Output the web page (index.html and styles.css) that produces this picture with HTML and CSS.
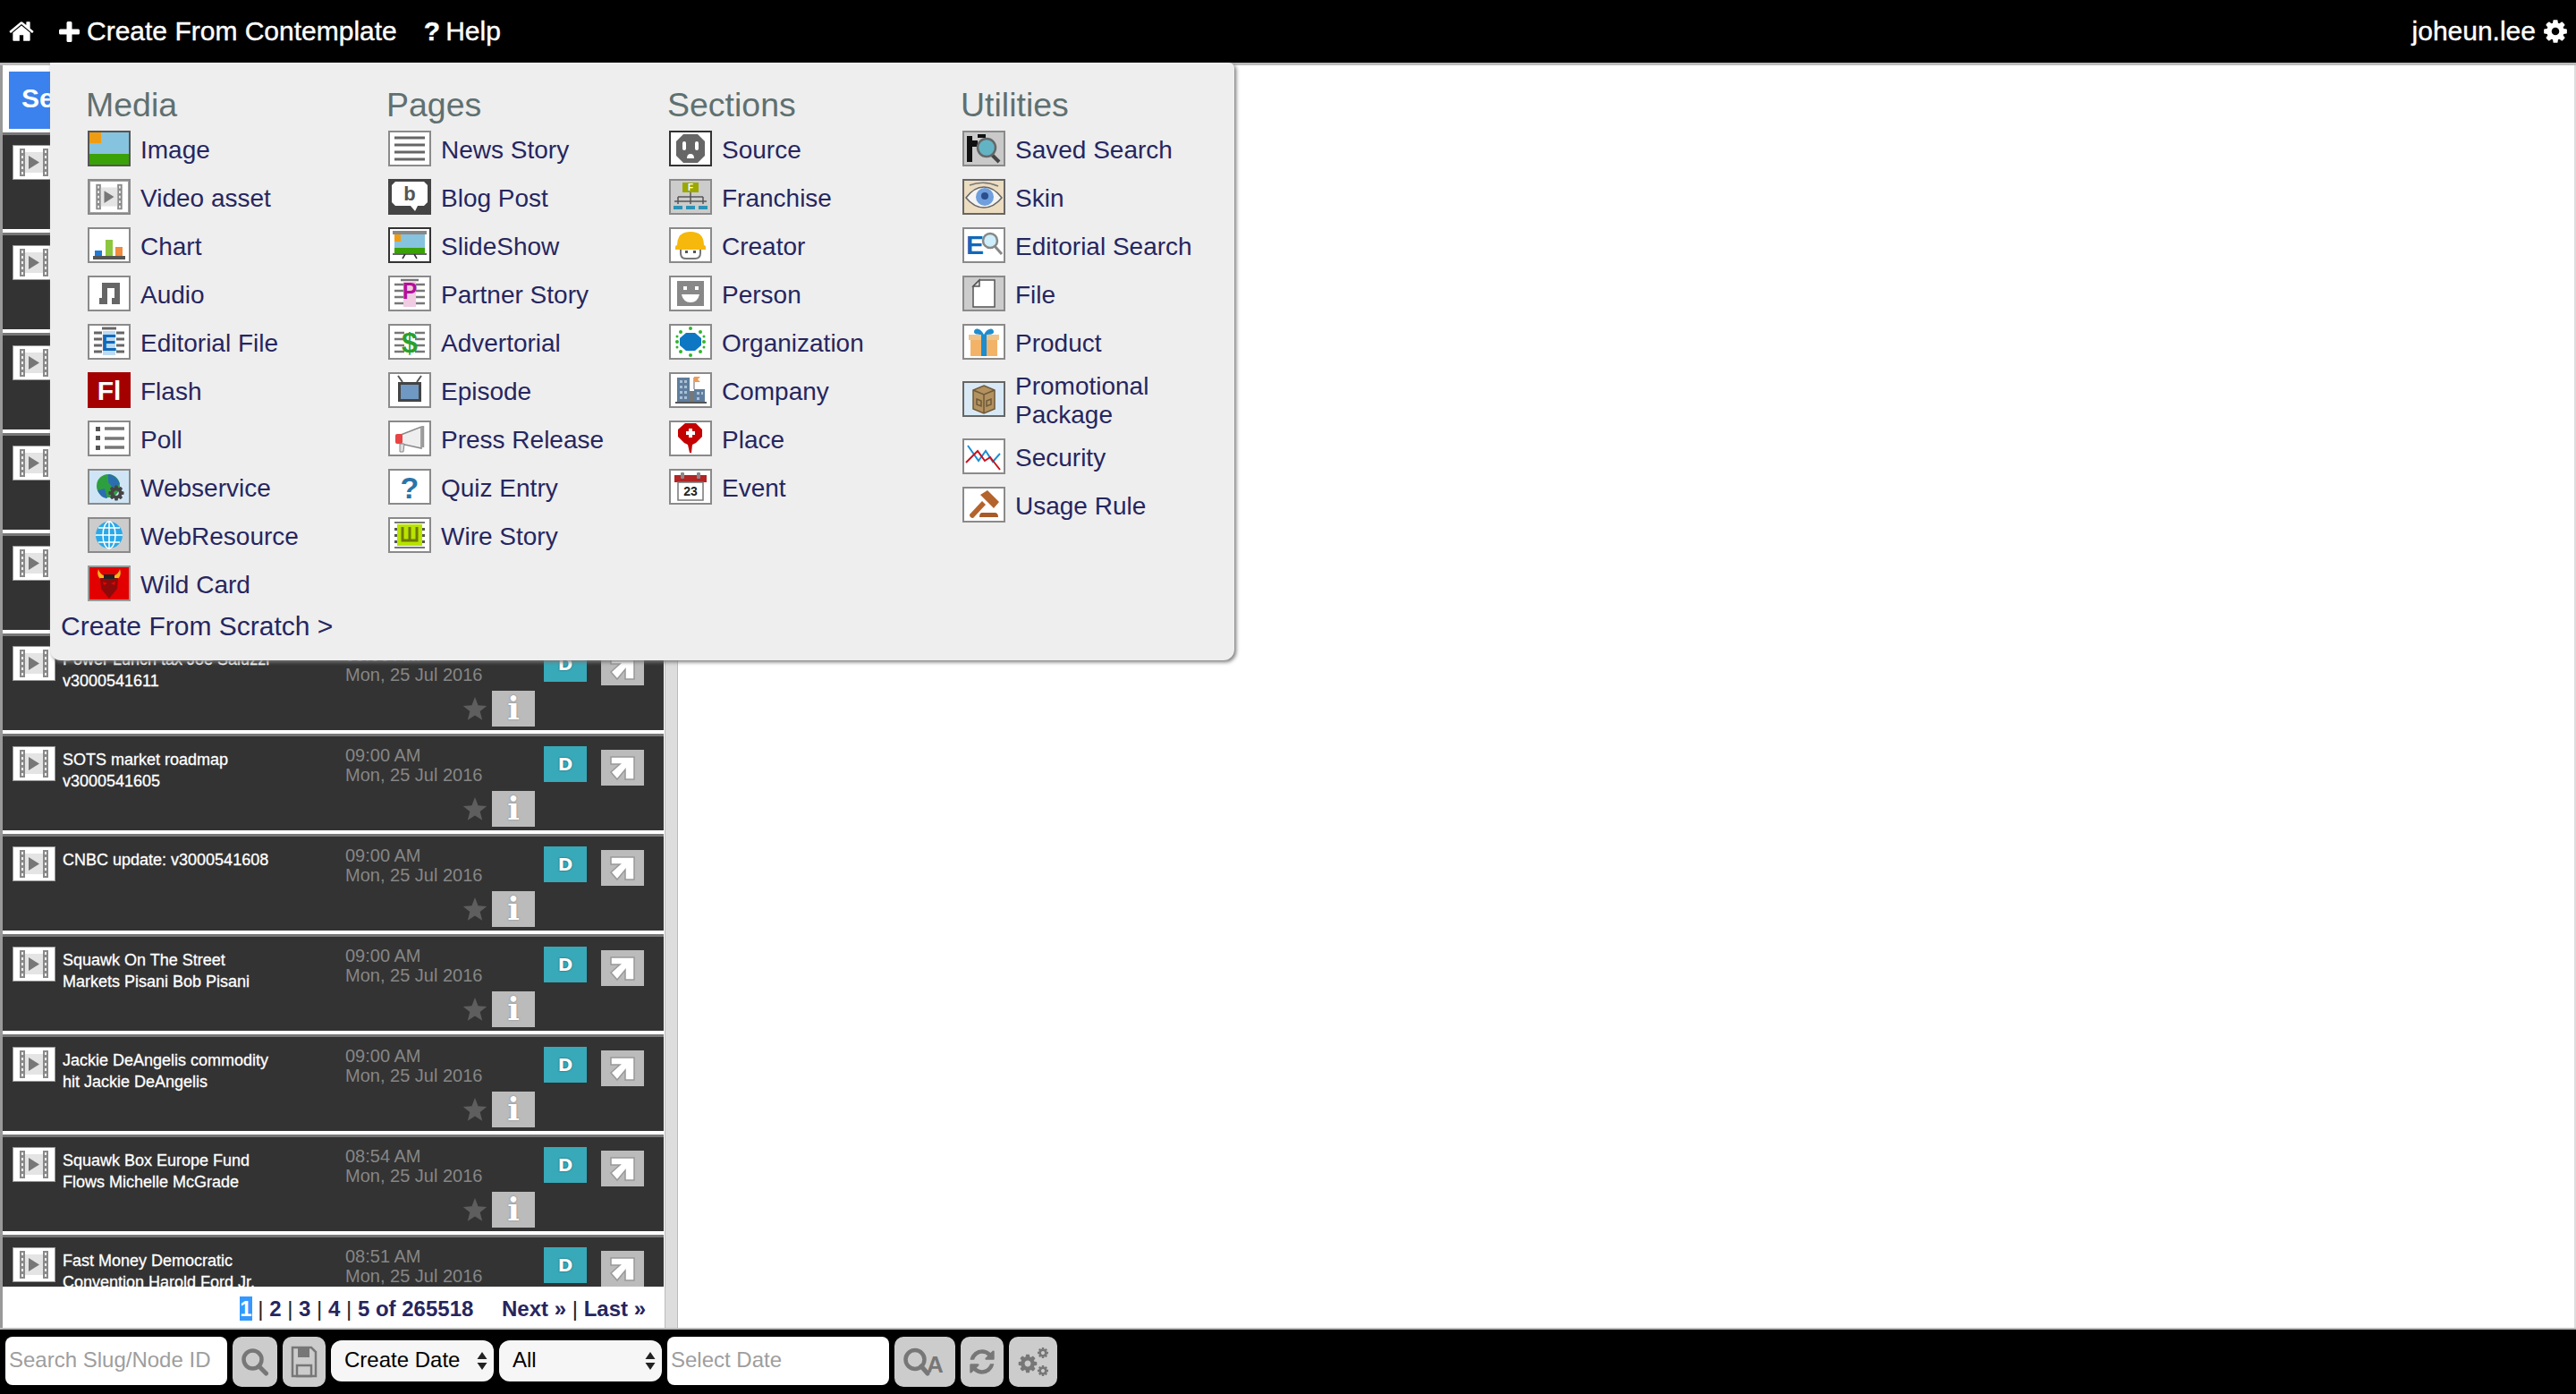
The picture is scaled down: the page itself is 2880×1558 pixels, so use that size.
FILE: index.html
```html
<!DOCTYPE html>
<html>
<head>
<meta charset="utf-8">
<title>Contemplate</title>
<link rel="stylesheet" href="styles.css">
</head>
<body>
<svg class="defs" xmlns="http://www.w3.org/2000/svg">
  <symbol id="film" viewBox="0 0 48 39">
    <rect width="48" height="39" fill="#999"/>
    <rect x="1" y="1" width="46" height="37" fill="#fff"/>
    <rect x="8" y="4" width="6" height="31" fill="#8a8a8a"/>
    <rect x="34" y="4" width="6" height="31" fill="#8a8a8a"/>
    <path d="M10 6h2v3h-2zM10 12h2v3h-2zM10 18h2v3h-2zM10 24h2v3h-2zM10 30h2v3h-2zM36 6h2v3h-2zM36 12h2v3h-2zM36 18h2v3h-2zM36 24h2v3h-2zM36 30h2v3h-2z" fill="#eee"/>
    <rect x="14" y="8" width="20" height="23" fill="#e4e4e4"/>
    <path d="M18 12l12 7.500-12 7.500z" fill="#777"/>
  </symbol>
  <symbol id="cog" viewBox="0 0 1792 1792">
    <path d="M1152 896q0-106-75-181t-181-75-181 75-75 181 75 181 181 75 181-75 75-181zm512-109v222q0 12-8 23t-20 13l-185 28q-19 54-39 91 35 50 107 138 10 12 10 25t-9 23q-27 37-99 108t-94 71q-12 0-26-9l-138-108q-44 23-91 38-16 136-29 186-7 28-36 28h-222q-14 0-24.500-8.500t-11.500-21.500l-28-184q-49-16-90-37l-141 107q-10 9-25 9-14 0-25-11-126-114-165-168-7-10-7-23 0-12 8-23 15-21 51-66.500t54-70.500q-27-50-41-99l-183-27q-13-2-21-12.500t-8-23.500v-222q0-12 8-23t19-13l186-28q14-46 39-92-40-57-107-138-10-12-10-24 0-10 9-23 26-36 98.500-107.500t94.500-71.500q13 0 26 10l138 107q44-23 91-38 16-136 29-186 7-28 36-28h222q14 0 24.500 8.500t11.500 21.500l28 184q49 16 90 37l142-107q9-9 24-9 13 0 25 10 129 119 165 170 7 8 7 22 0 12-8 23-15 21-51 66.500t-54 70.500q26 50 41 98l183 28q13 2 21 12.500t8 23.500z"/>
  </symbol>
  <symbol id="star" viewBox="0 0 26 26"><path d="M13 1l3.300 8.500 9 .6-7 5.800 2.300 8.900L13 20l-7.600 4.800 2.300-8.900-7-5.800 9-.6z" fill="#5e5e5e"/></symbol>
  <symbol id="arrow" viewBox="0 0 48 40"><path d="M11 8h26v25H27V22l-9 11-7-8 10-9H11z" fill="#fff" stroke="#999" stroke-width="1.500"/></symbol>
  <symbol id="updown" viewBox="0 0 12 20"><path d="M6 0l5.500 8H.5zM6 20L.5 12h11z" fill="#222"/></symbol>
</svg>

<div class="topbar">
  <svg class="home" viewBox="0 0 1792 1792"><path fill="#fff" d="M1472 992v480q0 26-19 45t-45 19h-384v-384h-256v384h-384q-26 0-45-19t-19-45v-480q0-1 .5-3t.5-3l575-474 575 474q1 2 1 6zm223-69l-62 74q-8 9-21 11h-3q-13 0-21-7l-692-577-692 577q-12 8-24 7-13-2-21-11l-62-74q-8-10-7-23.500t11-21.500l719-599q32-26 76-26t76 26l244 204v-195q0-14 9-23t23-9h192q14 0 23 9t9 23v408l219 182q10 8 11 21.500t-7 23.500z"/></svg>
  <svg class="plus" viewBox="0 0 23 23"><path fill="#fff" d="M8.500 1.500q0-1.500 1.500-1.500h3q1.500 0 1.500 1.500v7h7q1.500 0 1.500 1.500v3q0 1.500-1.500 1.500h-7v7q0 1.500-1.500 1.500h-3q-1.500 0-1.500-1.500v-7h-7Q0 14.500 0 13v-3q0-1.500 1.500-1.500h7z"/></svg>
  <span class="nav-create">Create From Contemplate</span>
  <b class="nav-q">?</b>
  <span>Help</span>
  <span class="nav-user">joheun.lee</span>
  <svg class="nav-cog"><use href="#cog" fill="#fff"/></svg>
</div>

<div class="middle">
  <div class="left">
    <div class="searchbtn">Se</div>
    <div class="list">
      <div class="row"><svg class="thumb"><use href="#film"/></svg></div>
      <div class="row"><svg class="thumb"><use href="#film"/></svg></div>
      <div class="row"><svg class="thumb"><use href="#film"/></svg></div>
      <div class="row"><svg class="thumb"><use href="#film"/></svg></div>
      <div class="row"><svg class="thumb"><use href="#film"/></svg></div>

      <div class="row">
        <svg class="thumb"><use href="#film"/></svg>
        <div class="title">Power Lunch tax Joe Saluzzi<br>v3000541611</div>
        <div class="meta">
          <div class="time">09:00 AM<br>Mon, 25 Jul 2016</div>
          <div class="meta-btns"><svg class="star"><use href="#star"/></svg><div class="info">i</div></div>
        </div>
        <div class="dbtn">D</div>
        <svg class="arrow"><use href="#arrow"/></svg>
      </div>
      <div class="row">
        <svg class="thumb"><use href="#film"/></svg>
        <div class="title">SOTS market roadmap<br>v3000541605</div>
        <div class="meta">
          <div class="time">09:00 AM<br>Mon, 25 Jul 2016</div>
          <div class="meta-btns"><svg class="star"><use href="#star"/></svg><div class="info">i</div></div>
        </div>
        <div class="dbtn">D</div>
        <svg class="arrow"><use href="#arrow"/></svg>
      </div>
      <div class="row">
        <svg class="thumb"><use href="#film"/></svg>
        <div class="title">CNBC update: v3000541608</div>
        <div class="meta">
          <div class="time">09:00 AM<br>Mon, 25 Jul 2016</div>
          <div class="meta-btns"><svg class="star"><use href="#star"/></svg><div class="info">i</div></div>
        </div>
        <div class="dbtn">D</div>
        <svg class="arrow"><use href="#arrow"/></svg>
      </div>
      <div class="row">
        <svg class="thumb"><use href="#film"/></svg>
        <div class="title">Squawk On The Street<br>Markets Pisani Bob Pisani</div>
        <div class="meta">
          <div class="time">09:00 AM<br>Mon, 25 Jul 2016</div>
          <div class="meta-btns"><svg class="star"><use href="#star"/></svg><div class="info">i</div></div>
        </div>
        <div class="dbtn">D</div>
        <svg class="arrow"><use href="#arrow"/></svg>
      </div>
      <div class="row">
        <svg class="thumb"><use href="#film"/></svg>
        <div class="title">Jackie DeAngelis commodity<br>hit Jackie DeAngelis</div>
        <div class="meta">
          <div class="time">09:00 AM<br>Mon, 25 Jul 2016</div>
          <div class="meta-btns"><svg class="star"><use href="#star"/></svg><div class="info">i</div></div>
        </div>
        <div class="dbtn">D</div>
        <svg class="arrow"><use href="#arrow"/></svg>
      </div>
      <div class="row">
        <svg class="thumb"><use href="#film"/></svg>
        <div class="title">Squawk Box Europe Fund<br>Flows Michelle McGrade</div>
        <div class="meta">
          <div class="time">08:54 AM<br>Mon, 25 Jul 2016</div>
          <div class="meta-btns"><svg class="star"><use href="#star"/></svg><div class="info">i</div></div>
        </div>
        <div class="dbtn">D</div>
        <svg class="arrow"><use href="#arrow"/></svg>
      </div>
      <div class="row">
        <svg class="thumb"><use href="#film"/></svg>
        <div class="title">Fast Money Democratic<br>Convention Harold Ford Jr.</div>
        <div class="meta">
          <div class="time">08:51 AM<br>Mon, 25 Jul 2016</div>
          <div class="meta-btns"><svg class="star"><use href="#star"/></svg><div class="info">i</div></div>
        </div>
        <div class="dbtn">D</div>
        <svg class="arrow"><use href="#arrow"/></svg>
      </div>
    </div>
    <div class="pager"><span class="current">1</span> <i>|</i> 2 <i>|</i> 3 <i>|</i> 4 <i>|</i> 5 of 265518 <span class="pager-next">Next »</span> <i>|</i> Last »</div>
  </div>
  <div class="splitter"></div>
  <div class="main"></div>
</div>

<div class="bottombar">
  <input class="field field-slug" placeholder="Search Slug/Node ID">
  <div class="tool tool-search"><svg viewBox="0 0 32 32" width="32" height="32"><circle cx="13.500" cy="13.500" r="10" fill="none" stroke="#777" stroke-width="4.500"/><path d="M20.500 21l8 8" stroke="#777" stroke-width="5" stroke-linecap="round"/></svg></div>
  <div class="tool tool-save"><svg viewBox="0 0 30 36" width="30" height="36"><path d="M2 2h21l5 5v27H2z" fill="none" stroke="#777" stroke-width="2.500"/><path d="M8 2h13v11H8z" fill="#777"/><path d="M7 22h16v12H7z" fill="none" stroke="#777" stroke-width="2.500"/></svg></div>
  <div class="selbox selbox-date"><select><option>Create Date</option></select><svg class="updown"><use href="#updown"/></svg></div>
  <div class="selbox selbox-all"><select><option>All</option></select><svg class="updown"><use href="#updown"/></svg></div>
  <input class="field field-date" placeholder="Select Date">
  <div class="tool tool-qa"><svg viewBox="0 0 50 32" width="50" height="32"><circle cx="14" cy="13.500" r="10.500" fill="none" stroke="#777" stroke-width="4.500"/><path d="M21 21l7 8" stroke="#777" stroke-width="5" stroke-linecap="round"/><text x="27" y="28" class="qa-a">A</text></svg></div>
  <div class="tool tool-refresh"><svg viewBox="0 0 1792 1792" width="32" height="32"><path fill="#777" d="M1639 1056q0 5-1 7-64 268-268 434.500t-478 166.500q-146 0-282.500-55t-243.500-157l-129 129q-19 19-45 19t-45-19-19-45v-448q0-26 19-45t45-19h448q26 0 45 19t19 45-19 45l-137 137q71 66 161 102t187 36q134 0 250-65t186-179q11-17 53-117 8-23 30-23h192q13 0 22.500 9.500t9.500 22.500zm25-800v448q0 26-19 45t-45 19h-448q-26 0-45-19t-19-45 19-45l138-138q-148-137-349-137-134 0-250 65t-186 179q-11 17-53 117-8 23-30 23h-199q-13 0-22.500-9.500t-9.500-22.500v-7q65-268 270-434.500t480-166.500q146 0 284 55.500t245 156.500l130-129q19-19 45-19t45 19 19 45z"/></svg></div>
  <div class="tool tool-cogs"><svg viewBox="0 0 36 34" width="36" height="34"><use href="#cog" x="0" y="7" width="24" height="24" fill="#777"/><use href="#cog" x="22" y="0" width="14" height="14" fill="#777"/><use href="#cog" x="22" y="20" width="14" height="14" fill="#777"/></svg></div>
</div>

<div class="menu">
  <div class="menu-cols">
    <div class="col col-media">
      <h3>Media</h3>
      <div class="item"><div class="ico ico-dark"><svg viewBox="0 0 44 36"><rect width="44" height="36" fill="#86c3de"/><rect y="24" width="44" height="12" fill="#3aa108"/><rect width="13" height="12" fill="#f09c12"/></svg></div><span>Image</span></div>
      <div class="item"><div class="ico"><svg viewBox="0 0 44 36"><use href="#film"/></svg></div><span>Video asset</span></div>
      <div class="item"><div class="ico"><svg viewBox="0 0 44 36"><rect x="6" y="24" width="8" height="7" fill="#1f7ad6"/><rect x="18" y="12" width="8" height="19" fill="#8cc63f"/><rect x="29" y="20" width="8" height="11" fill="#f08a3c"/><rect x="4" y="30" width="36" height="4" fill="#555"/></svg></div><span>Chart</span></div>
      <div class="item"><div class="ico"><svg viewBox="0 0 44 36"><path d="M14 6h20v24h-9V23h3V12H20v18h-9v-7h3z" fill="#666"/></svg></div><span>Audio</span></div>
      <div class="item"><div class="ico"><svg viewBox="0 0 44 36"><path d="M5 8h9M5 15h9M5 22h9M5 29h9M30 8h9M30 15h9M30 22h9M30 29h9M14 3h16" stroke="#666" stroke-width="3"/><rect x="15" y="6" width="14" height="27" fill="#bcdaf2"/><text x="22" y="28" class="g g-e">E</text></svg></div><span>Editorial File</span></div>
      <div class="item"><div class="ico ico-flash"><svg viewBox="0 0 44 36"><text x="22" y="29" class="g g-fl">Fl</text></svg></div><span>Flash</span></div>
      <div class="item"><div class="ico"><svg viewBox="0 0 44 36"><path d="M7 5h5v5H7zM7 15h5v5H7zM7 26h5v5H7z" fill="#555"/><path d="M17 7h22M17 18h22M17 28h22" stroke="#777" stroke-width="3.500"/></svg></div><span>Poll</span></div>
      <div class="item"><div class="ico ico-blue"><svg viewBox="0 0 44 36"><circle cx="21" cy="17" r="13" fill="#2e9f3e"/><path d="M21 4c6 0 11 5 13 11l-8 4-5-6zM9 22l8-2 3 11c-5 0-9-4-11-9z" fill="#2b6fb0"/><use href="#cog" x="20" y="15" width="20" height="20" fill="#444"/></svg></div><span>Webservice</span></div>
      <div class="item"><div class="ico ico-gray"><svg viewBox="0 0 44 36"><circle cx="22" cy="18" r="15" fill="#2aa9e8"/><g fill="none" stroke="#fff" stroke-width="1.500"><ellipse cx="22" cy="18" rx="7" ry="15"/><path d="M22 3v30M7 18h30M10 10h24M10 26h24"/></g></svg></div><span>WebResource</span></div>
      <div class="item"><div class="ico ico-red"><svg viewBox="0 0 44 36"><path d="M10 2c-2 6 0 10 5 13l3-5c-4-1-7-4-8-8zM34 2c2 6 0 10-5 13l-3-5c4-1 7-4 8-8z" fill="#f5b81e"/><path d="M12 12h20l-1 12-9 11-9-11z" fill="#8e0a0a"/><rect x="16" y="8" width="12" height="5" fill="#222"/><path d="M15 16l5 2-4 2zM29 16l-5 2 4 2z" fill="#e00"/></svg></div><span>Wild Card</span></div>
    </div>
    <div class="col col-pages">
      <h3>Pages</h3>
      <div class="item"><div class="ico"><svg viewBox="0 0 44 36"><path d="M5 6h34M5 14h34M5 22h34M5 30h34" stroke="#666" stroke-width="3"/></svg></div><span>News Story</span></div>
      <div class="item"><div class="ico ico-blog"><svg viewBox="0 0 44 36"><path d="M6 1h32l4 4v19l-4 4h-7l-3 6-5-6H6l-4-4V5z" fill="#fff"/><text x="22" y="22" class="g g-b">b</text></svg></div><span>Blog Post</span></div>
      <div class="item"><div class="ico ico-black"><svg viewBox="0 0 44 36"><rect x="3" y="2" width="38" height="4" fill="#888"/><rect x="5" y="6" width="34" height="21" fill="#86c3de"/><rect x="5" y="21" width="34" height="6" fill="#3aa108"/><rect x="5" y="6" width="7" height="8" fill="#f09c12"/><path d="M3 28h38M17 28l-3 5M27 28l3 5" stroke="#333" stroke-width="1.500"/></svg></div><span>SlideShow</span></div>
      <div class="item"><div class="ico"><svg viewBox="0 0 44 36"><path d="M5 8h10M5 15h10M5 22h10M5 29h10M29 8h10M29 15h10M29 22h10M29 29h10M12 3h20" stroke="#777" stroke-width="2.500"/><rect x="15" y="5" width="14" height="28" fill="#f0cbe2"/><text x="22" y="24" class="g g-p">P</text></svg></div><span>Partner Story</span></div>
      <div class="item"><div class="ico"><svg viewBox="0 0 44 36"><path d="M5 8h11M5 15h11M5 22h11M5 29h11M28 8h11M28 15h11M28 22h11M28 29h11" stroke="#777" stroke-width="2.500"/><text x="22" y="30" class="g g-dollar">$</text></svg></div><span>Advertorial</span></div>
      <div class="item"><div class="ico"><svg viewBox="0 0 44 36"><path d="M14 9L9 2M30 9l5-7" stroke="#555" stroke-width="2"/><rect x="9" y="9" width="26" height="22" fill="#444"/><rect x="12" y="12" width="20" height="16" fill="#6f98c2"/></svg></div><span>Episode</span></div>
      <div class="item"><div class="ico"><svg viewBox="0 0 44 36"><path d="M12 14l23-9v24l-23-5z" fill="#eee" stroke="#888" stroke-width="1.500"/><path d="M37 4v24" stroke="#999" stroke-width="2.500"/><rect x="6" y="13" width="8" height="11" rx="2" fill="#ea4343"/><path d="M11 24h5l-1 9h-4z" fill="#ddd" stroke="#888"/></svg></div><span>Press Release</span></div>
      <div class="item"><div class="ico"><svg viewBox="0 0 44 36"><text x="22" y="31" class="g g-q">?</text></svg></div><span>Quiz Entry</span></div>
      <div class="item"><div class="ico"><svg viewBox="0 0 44 36"><rect x="8" y="6" width="28" height="24" fill="#b9e300"/><path d="M14 9v15h16V9M22 9v15" fill="none" stroke="#6d7a00" stroke-width="3"/><path d="M5 4h34M5 32h34" stroke="#777" stroke-width="2"/><path d="M5 10h3v3H5zM5 17h3v3H5zM5 24h3v3H5zM36 10h3v3h-3zM36 17h3v3h-3zM36 24h3v3h-3z" fill="#555"/></svg></div><span>Wire Story</span></div>
    </div>
    <div class="col col-sections">
      <h3>Sections</h3>
      <div class="item"><div class="ico ico-black"><svg viewBox="0 0 44 36"><path d="M14 2h16l8 8v16l-8 8H14l-8-8V10z" fill="#666"/><rect x="13" y="10" width="4" height="10" rx="2" fill="#fff"/><rect x="27" y="10" width="4" height="10" rx="2" fill="#fff"/><path d="M18 29q0-5 4-5t4 5z" fill="#fff"/></svg></div><span>Source</span></div>
      <div class="item"><div class="ico ico-gray"><svg viewBox="0 0 44 36"><rect x="13" y="2" width="18" height="11" fill="#9aa800"/><text x="22" y="11" class="g g-f">F</text><path d="M22 13v10M8 18h28M8 18v8M36 18v8M22 18v8M4 23h36" stroke="#555" stroke-width="1.500" fill="none"/><path d="M3 28h10v4H3zM17 28h10v4H17zM31 28h10v4H31z" fill="#2b93b5"/></svg></div><span>Franchise</span></div>
      <div class="item"><div class="ico"><svg viewBox="0 0 44 36"><path d="M11 20v7q0 6 6 6h10q6 0 6-6v-7z" fill="#fff" stroke="#777" stroke-width="2"/><path d="M5 20q0-2 2-2 0-15 15-15t15 15q2 0 2 2v3H5z" fill="#f6b80c"/><path d="M16 24h3v3h-3zM25 24h3v3h-3z" fill="#555"/></svg></div><span>Creator</span></div>
      <div class="item"><div class="ico"><svg viewBox="0 0 44 36"><rect x="7" y="4" width="30" height="28" fill="#888"/><rect x="14" y="10" width="4" height="4" fill="#fff"/><rect x="27" y="10" width="4" height="4" fill="#fff"/><path d="M12 19h20q-2 9-10 9t-10-9z" fill="#fff"/></svg></div><span>Person</span></div>
      <div class="item"><div class="ico"><svg viewBox="0 0 44 36"><path d="M17 8h10l7 6v8l-7 6H17l-7-6v-8z" fill="#0d77c4"/><g fill="#2fb52f"><circle cx="22" cy="3" r="2"/><circle cx="22" cy="33" r="2"/><circle cx="7" cy="18" r="2"/><circle cx="37" cy="18" r="2"/><circle cx="11" cy="7" r="2"/><circle cx="33" cy="7" r="2"/><circle cx="11" cy="29" r="2"/><circle cx="33" cy="29" r="2"/><circle cx="7" cy="12" r="1.500"/><circle cx="37" cy="12" r="1.500"/><circle cx="7" cy="24" r="1.500"/><circle cx="37" cy="24" r="1.500"/></g></svg></div><span>Organization</span></div>
      <div class="item"><div class="ico"><svg viewBox="0 0 44 36"><rect x="7" y="4" width="14" height="27" fill="#5f7d9c"/><rect x="26" y="17" width="12" height="14" fill="#5f7d9c"/><path d="M21 31V19h5v12z" fill="#777"/><path d="M26 4v13" stroke="#999" stroke-width="1.500"/><path d="M26 3h7l-3 3 3 3h-7z" fill="#ef9a55"/><path d="M10 7h3v3h-3zM15 7h3v3h-3zM10 13h3v3h-3zM15 13h3v3h-3zM10 19h3v3h-3zM15 19h3v3h-3zM10 25h3v3h-3zM15 25h3v3h-3zM29 20h3v3h-3zM34 20h2v3h-2zM29 26h3v3h-3z" fill="#a9c0d6"/><rect x="5" y="31" width="35" height="2" fill="#555"/></svg></div><span>Company</span></div>
      <div class="item"><div class="ico"><svg viewBox="0 0 44 36"><path d="M16 1h12l7 7v8l-7 7-4 2-1 9h-2l-2-9-4-2-7-7V8z" fill="#c40000"/><path d="M20 7h4v3h3v4h-3v3h-4v-3h-3v-4h3z" fill="#fff"/></svg></div><span>Place</span></div>
      <div class="item"><div class="ico"><svg viewBox="0 0 44 36"><rect x="4" y="5" width="36" height="8" fill="#b32424"/><rect x="11" y="2" width="4" height="7" rx="1" fill="#888"/><rect x="29" y="2" width="4" height="7" rx="1" fill="#888"/><rect x="8" y="13" width="28" height="20" fill="#fff" stroke="#777" stroke-width="1.500"/><text x="22" y="28" class="g g-23">23</text></svg></div><span>Event</span></div>
    </div>
    <div class="col col-util">
      <h3>Utilities</h3>
      <div class="item"><div class="ico"><svg viewBox="0 0 44 36"><rect width="44" height="36" fill="#c9c9c9"/><path d="M3 4h6v5h6v7H9v17H3zM15 2h9v4h-9z" fill="#111"/><path d="M29 23l10 10" stroke="#444" stroke-width="4"/><circle cx="25" cy="17" r="10" fill="#62b4c4" stroke="#666" stroke-width="2.500"/></svg></div><span>Saved Search</span></div>
      <div class="item"><div class="ico ico-tan"><svg viewBox="0 0 44 36"><path d="M2 19q9-12 20-12t20 12q-9 11-20 11T2 19z" fill="#f4f4f4" stroke="#666" stroke-width="1.500"/><circle cx="23" cy="18" r="10" fill="#6f9fdc"/><circle cx="23" cy="17" r="4" fill="#2b4f8a"/><path d="M6 5q16-6 32 1" fill="none" stroke="#777" stroke-width="1.500"/></svg></div><span>Skin</span></div>
      <div class="item"><div class="ico"><svg viewBox="0 0 44 36"><text x="2" y="28" class="g g-es">E</text><circle cx="29" cy="13" r="8" fill="#cdeefa" stroke="#888" stroke-width="2.500"/><path d="M34 19l8 9" stroke="#888" stroke-width="3"/></svg></div><span>Editorial Search</span></div>
      <div class="item"><div class="ico ico-gray"><svg viewBox="0 0 44 36"><path d="M17 3h17v30H10V10z" fill="#fff" stroke="#555" stroke-width="1.500"/><path d="M17 3v7h-7z" fill="#ddd" stroke="#555" stroke-width="1.500"/></svg></div><span>File</span></div>
      <div class="item"><div class="ico"><svg viewBox="0 0 44 36"><rect x="7" y="14" width="30" height="20" fill="#f2b368"/><rect x="5" y="10" width="34" height="6" fill="#edc48c"/><rect x="19" y="10" width="6" height="24" fill="#1d8dd0"/><path d="M22 10c-4-8-11-8-11-3 0 3 5 3 11 3zM22 10c4-8 11-8 11-3 0 3-5 3-11 3z" fill="#1d8dd0"/></svg></div><span>Product</span></div>
      <div class="item item-tall"><div class="ico ico-lblue"><svg viewBox="0 0 44 36"><path d="M22 3l12 5v21l-12 5-12-5V8z" fill="#b3925f" stroke="#6e5a3a" stroke-width="1.500"/><path d="M10 8l12 5 12-5M22 13v21M14 18l5 2v6l-5-2zM25 20l5-2v6l-5 2z" fill="none" stroke="#6e5a3a" stroke-width="1.500"/></svg></div><span>Promotional Package</span></div>
      <div class="item"><div class="ico"><svg viewBox="0 0 44 36"><path d="M4 6l12 17 8-11 8 12 8-9" fill="none" stroke="#1d8dd0" stroke-width="2"/><path d="M2 25l13-13 8 11 6-4 11 14" fill="none" stroke="#c8101c" stroke-width="2"/></svg></div><span>Security</span></div>
      <div class="item"><div class="ico"><svg viewBox="0 0 44 36"><path d="M6 29l14-15 4 4-14 15q-4 0-4-4z" fill="#b4632c"/><path d="M18 7l8-5 13 13-6 7z" fill="#b4632c"/><path d="M20 27h14q4 0 4 5H17q0-5 3-5z" fill="#a85a28"/></svg></div><span>Usage Rule</span></div>
    </div>
  </div>
  <div class="scratch">Create From Scratch &gt;</div>
</div>
</body>
</html>
```

FILE: styles.css
```css
* {
  box-sizing: border-box;
}

html, body {
  margin: 0;
  height: 100%;
  overflow: hidden;
}

body {
  position: relative;
  display: flex;
  flex-direction: column;
  width: 2880px;
  height: 1558px;
  background: #fff;
  font-family: "Liberation Sans", Arial, sans-serif;
}

.defs {
  position: absolute;
  width: 0;
  height: 0;
}

/* top bar */
.topbar {
  display: flex;
  align-items: center;
  height: 70px;
  padding: 0 8px 0 9px;
  background: #000;
  color: #fff;
  font-size: 30px;
  -webkit-text-stroke: 0.4px #fff;
}

.home {
  width: 30px;
  height: 30px;
}

.plus {
  width: 23px;
  height: 23px;
  margin: 0 8px 0 27px;
}

.nav-create {
  margin-right: 30px;
}

.nav-q {
  margin-right: 6px;
}

.nav-user {
  margin-left: auto;
}

.nav-cog {
  width: 30px;
  height: 30px;
  margin-left: 7px;
}

/* middle part */
.middle {
  display: flex;
  height: 1416px;
  border-top: 3px solid #bbb;
  border-bottom: 2px solid #bbb;
}

.left {
  width: 743px;
  padding-top: 7px;
  border-left: 3px solid #999;
}

.searchbtn {
  width: 200px;
  height: 64px;
  margin: 0 0 4px 7px;
  padding-left: 14px;
  background: #3b82ee;
  color: #fff;
  font-size: 30px;
  font-weight: bold;
  line-height: 60px;
}

.list {
  width: 739px;
  height: 1290px;
  overflow: hidden;
}

.row {
  display: flex;
  align-items: flex-start;
  height: 108px;
  margin-bottom: 4px;
  padding: 11px 0 0 11px;
  border-top: 3px solid #777;
  background: #333;
}

.thumb {
  flex: none;
  width: 48px;
  height: 39px;
  margin-right: 8px;
}

.title {
  width: 316px;
  margin-top: 3px;
  color: #fff;
  font-size: 18px;
  line-height: 24px;
  -webkit-text-stroke: 0.3px #fff;
}

.meta {
  width: 212px;
  margin-top: -1px;
}

.time {
  color: #868686;
  font-size: 20px;
  line-height: 22px;
}

.meta-btns {
  display: flex;
  justify-content: flex-end;
  align-items: center;
  margin-top: 7px;
}

.star {
  width: 28px;
  height: 28px;
  margin-right: 5px;
}

.info {
  width: 48px;
  height: 40px;
  background: #bbb;
  color: #fff;
  font-family: "DejaVu Serif", serif;
  font-size: 36px;
  font-weight: bold;
  line-height: 38px;
  text-align: center;
  text-shadow: 0 0 2px #777;
}

.dbtn {
  width: 48px;
  height: 40px;
  margin-left: 10px;
  background: #37a9b9;
  color: #fff;
  font-family: "DejaVu Sans", sans-serif;
  font-size: 20px;
  font-weight: bold;
  line-height: 40px;
  text-align: center;
  text-shadow: 0 0 2px #14505c;
}

.arrow {
  width: 48px;
  height: 40px;
  margin: 4px 0 0 16px;
  background: #bbb;
}

.pager {
  height: 46px;
  padding: 4px 21px 0 0;
  color: #26265f;
  font-size: 24px;
  font-weight: bold;
  line-height: 42px;
  text-align: right;
}

.pager i {
  color: #222;
  font-style: normal;
  font-weight: normal;
}

.current {
  background: #3399ff;
  color: #fff;
}

.pager-next {
  margin-left: 25px;
}

.splitter {
  width: 15px;
  border-left: 1px solid #bbb;
  border-right: 1px solid #bbb;
  background: #ddd;
}

.main {
  flex: 1;
  border-right: 2px solid #ddd;
}

/* bottom bar */
.bottombar {
  display: flex;
  align-items: flex-start;
  gap: 6px;
  height: 72px;
  padding: 8px 0 0 6px;
  background: #000;
}

.field {
  height: 54px;
  padding: 0 0 2px 4px;
  border: none;
  border-radius: 8px;
  background: #fff;
  font-family: "Liberation Sans", Arial, sans-serif;
  font-size: 24px;
}

.field::placeholder {
  color: #9e9e9e;
  opacity: 1;
}

.field-slug {
  width: 248px;
}

.field-date {
  width: 248px;
}

.tool {
  display: flex;
  align-items: center;
  justify-content: center;
  height: 56px;
  border-radius: 10px;
  background: #ccc;
}

.tool-search {
  width: 50px;
}

.tool-save {
  width: 48px;
}

.tool-qa {
  width: 68px;
}

.tool-refresh {
  width: 48px;
}

.tool-cogs {
  width: 54px;
}

.qa-a {
  fill: #777;
  font-family: "Liberation Sans", Arial, sans-serif;
  font-size: 26px;
  font-weight: bold;
}

.selbox {
  position: relative;
  height: 46px;
  margin-top: 4px;
}

.selbox-date,
.selbox-all {
  width: 182px;
}

.selbox select {
  display: block;
  width: 100%;
  height: 46px;
  padding: 0 0 3px 15px;
  border: none;
  border-radius: 12px;
  background: #f6f6f6;
  color: #000;
  font-family: "Liberation Sans", Arial, sans-serif;
  font-size: 24px;
  appearance: none;
}

.updown {
  position: absolute;
  top: 13px;
  right: 7px;
  width: 12px;
  height: 20px;
}

/* create menu */
.menu {
  position: absolute;
  top: 70px;
  left: 56px;
  width: 1324px;
  height: 668px;
  padding-top: 25px;
  border-radius: 0 6px 12px 12px;
  background: #eee;
  box-shadow: 2px 2px 4px #777;
}

.menu-cols {
  display: flex;
  padding-left: 42px;
}

.col-media {
  width: 336px;
}

.col-pages {
  width: 314px;
}

.col-sections {
  width: 328px;
}

.col h3 {
  height: 44px;
  margin: 0 0 7px -2px;
  color: #5f7070;
  font-size: 37.500px;
  font-weight: normal;
  line-height: 44px;
}

.item {
  display: flex;
  align-items: center;
  gap: 11px;
  height: 40px;
  margin-bottom: 14px;
  color: #26265f;
  font-size: 28px;
  line-height: 32px;
}

.item span {
  margin-top: 3px;
}

.item-tall {
  height: 60px;
}

.item-tall span {
  width: 180px;
}

.ico {
  flex: none;
  width: 48px;
  height: 40px;
  border: 2px solid #8a8a8a;
  background: #fff;
}

.ico svg {
  display: block;
  width: 44px;
  height: 36px;
}

.ico-dark {
  border-color: #555;
}

.ico-black {
  border-color: #333;
}

.ico-flash {
  border-color: #a50000;
  background: #a50000;
}

.ico-blue {
  background: #cfe5f5;
}

.ico-gray {
  background: #ccc;
}

.ico-red {
  background: #e30000;
  border-color: #999;
}

.ico-blog {
  border-color: #444;
  background: #444;
}

.ico-tan {
  border-color: #666;
  background: #ecdcc0;
}

.ico-lblue {
  border-color: #666;
  background: #d8e8f5;
}

/* letters inside the small icons */
.g {
  font-family: "Liberation Sans", Arial, sans-serif;
  font-weight: bold;
  text-anchor: middle;
}

.g-e {
  fill: #1268b8;
  font-size: 26px;
}

.g-fl {
  fill: #fff;
  font-size: 30px;
}

.g-b {
  fill: #555;
  font-size: 22px;
}

.g-p {
  fill: #b3109a;
  font-size: 25px;
}

.g-dollar {
  fill: #2aa02a;
  font-size: 32px;
}

.g-q {
  fill: #2a74a8;
  font-size: 34px;
}

.g-f {
  fill: #fff;
  font-size: 10px;
}

.g-23 {
  fill: #222;
  font-size: 14px;
}

.g-es {
  fill: #1268b8;
  font-size: 30px;
  text-anchor: start;
}

.scratch {
  margin-top: -4px;
  padding-left: 12px;
  color: #26265f;
  font-size: 30px;
  line-height: 36px;
}
```
